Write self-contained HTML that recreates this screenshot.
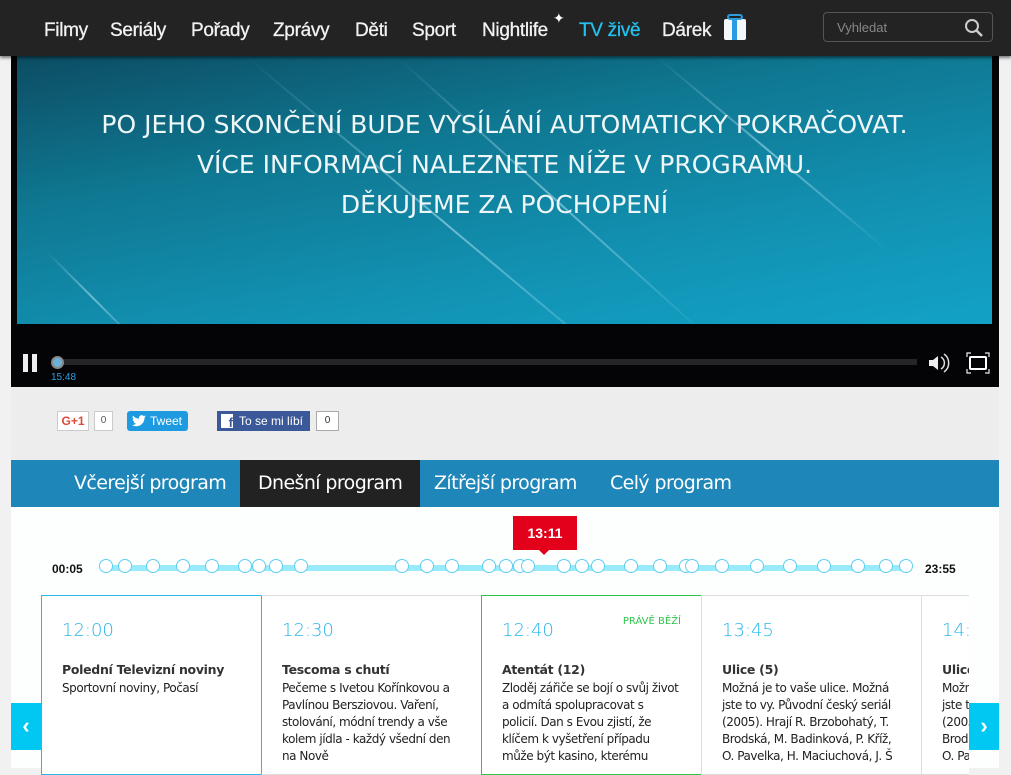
<!DOCTYPE html>
<html><head><meta charset="utf-8"><style>
*{margin:0;padding:0;box-sizing:border-box}
body{width:1011px;height:768px;overflow:hidden;background:#f1f1f1;font-family:"Liberation Sans",sans-serif;position:relative}
.abs{position:absolute}
#hdr{left:0;top:0;width:1011px;height:56px;background:#232323;box-shadow:0 2px 3px rgba(0,0,0,.5);z-index:5}
.nav{top:20px;font-size:19px;color:#f2f2f2;letter-spacing:-0.3px;-webkit-text-stroke:0.3px #f2f2f2}
#video{left:11px;top:56px;width:988px;height:331px;background:#040306}
#img{left:6px;top:0;width:975px;height:268px;background:linear-gradient(170deg,#0c4d63 0%,#0f7892 35%,#1292b3 70%,#12a2c6 100%);overflow:hidden}
.vt{width:100%;text-align:center;color:#eef6f8;font-size:25px;letter-spacing:0;font-family:"DejaVu Sans",sans-serif;font-weight:normal}
.streak{position:absolute;height:2px;background:linear-gradient(90deg,rgba(255,255,255,0),rgba(200,240,255,.5),rgba(255,255,255,0));transform-origin:left}
#main{left:11px;top:387px;width:988px;height:381px;background:#ededed}
#tabs{left:11px;top:460px;width:988px;height:47px;background:#1e86b8}
.tab{top:0;height:47px;line-height:47px;color:#fff;font-size:19px;font-family:"DejaVu Sans",sans-serif;letter-spacing:-0.6px;padding:0 18px}
#white{left:11px;top:507px;width:988px;height:261px;background:#fdfefe}
.dot{position:absolute;top:-6px;width:14px;height:14px;border-radius:50%;background:#fff;border:1.5px solid #5cd0f0}
.card{top:595px;width:221px;height:180px;border:1px solid #ddd;background:#fff;padding:24px 20px;font-family:"DejaVu Sans",sans-serif;overflow:hidden}
.tm{font-size:18px;color:#2ab6ea;font-weight:300;height:42px}
.ti{font-size:12.5px;font-weight:bold;color:#333;margin-bottom:3px;letter-spacing:-0.3px}
.ds{font-size:12px;color:#222;line-height:17px;letter-spacing:-0.45px}
.arr{top:703px;width:30px;height:47px;background:#00c8f2;color:#fff;font-size:22px;text-align:center;line-height:45px;font-weight:bold}
</style></head><body>
<div id="hdr" class="abs">
<div class="abs nav" style="left:44px">Filmy</div>
<div class="abs nav" style="left:110px">Seriály</div>
<div class="abs nav" style="left:191px">Pořady</div>
<div class="abs nav" style="left:273px">Zprávy</div>
<div class="abs nav" style="left:355px">Děti</div>
<div class="abs nav" style="left:412px">Sport</div>
<div class="abs nav" style="left:482px">Nightlife</div>
<div class="abs" style="left:553px;top:10px;color:#fff;font-size:14px">✦</div>
<div class="abs nav" style="left:579px;color:#22c2ee;-webkit-text-stroke:0.3px #22c2ee">TV živě</div>
<div class="abs nav" style="left:662px">Dárek</div>
<div class="abs" style="left:724px;top:19px;width:22px;height:21px;background:#f4f8fb;border-radius:2px"><div class="abs" style="left:8px;top:0;width:5px;height:21px;background:#2a9be0"></div><div class="abs" style="left:3px;top:-5px;width:16px;height:6px;border:2px solid #2a9be0;border-radius:4px"></div></div>
<div class="abs" style="left:823px;top:12px;width:170px;height:30px;border:1px solid #555;border-radius:4px"><span class="abs" style="left:13px;top:7px;color:#888;font-size:13px">Vyhledat</span>
<svg class="abs" style="left:140px;top:5px" width="20" height="20" viewBox="0 0 20 20"><circle cx="8" cy="8" r="6" stroke="#ccc" stroke-width="2" fill="none"/><path d="M12.5 12.5 L18 18" stroke="#ccc" stroke-width="2.5"/></svg></div>
</div>

<div id="video" class="abs">
<div id="img" class="abs">
<div class="streak" style="left:230px;top:0;width:520px;transform:rotate(40deg)"></div>
<div class="streak" style="left:380px;top:0;width:420px;transform:rotate(42deg)"></div>
<div class="streak" style="left:640px;top:0;width:300px;transform:rotate(40deg)"></div>
<div class="streak" style="left:30px;top:195px;width:130px;transform:rotate(45deg)"></div>
<div class="abs vt" style="top:54px">PO JEHO SKONČENÍ BUDE VYSÍLÁNÍ AUTOMATICKY POKRAČOVAT.</div>
<div class="abs vt" style="top:94px">VÍCE INFORMACÍ NALEZNETE NÍŽE V PROGRAMU.</div>
<div class="abs vt" style="top:134px">DĚKUJEME ZA POCHOPENÍ</div>
</div>
<div class="abs" style="left:12px;top:298px;width:5px;height:18px;background:#eee"></div>
<div class="abs" style="left:21px;top:298px;width:5px;height:18px;background:#eee"></div>
<div class="abs" style="left:44px;top:303px;width:862px;height:6px;background:#252528"></div>
<div class="abs" style="left:40px;top:300px;width:13px;height:13px;border-radius:50%;background:#6ab0d8;border:2px solid #888"></div>
<div class="abs" style="left:40px;top:316px;color:#2aa0e0;font-size:10px">15:48</div>
<svg class="abs" style="left:916px;top:296px" width="26" height="22" viewBox="0 0 26 22"><path d="M2 8h4l5-4v14l-5-4H2z" fill="#eee"/><path d="M14 5a7 7 0 0 1 0 12M17 2a11 11 0 0 1 0 18" stroke="#ddd" stroke-width="1.5" fill="none"/></svg>
<svg class="abs" style="left:955px;top:296px" width="24" height="22" viewBox="0 0 24 22"><path d="M1 5V1h4M19 1h4v4M23 17v4h-4M5 21H1v-4" stroke="#eee" stroke-width="1.2" fill="none"/><rect x="4" y="5" width="16" height="12" stroke="#fff" stroke-width="2" fill="none" rx="1"/></svg>
</div>

<div id="main" class="abs"></div>
<div class="abs" style="left:57px;top:411px;width:32px;height:20px;background:#fff;border:1px solid #ccc;color:#dd4b39;font-weight:bold;font-size:12px;text-align:center;line-height:18px">G+1</div>
<div class="abs" style="left:94px;top:411px;width:19px;height:20px;background:#fff;border:1px solid #ccc;font-size:10px;color:#555;text-align:center;line-height:18px">0</div>
<div class="abs" style="left:127px;top:411px;width:61px;height:20px;background:#1d9ae0;border-radius:3px;color:#fff;font-size:12px;line-height:20px;padding-left:23px">Tweet</div>
<svg class="abs" style="left:132px;top:415px" width="14" height="12" viewBox="0 0 14 12"><path d="M14 1.5c-.5.2-1 .4-1.6.5.6-.4 1-.9 1.2-1.6-.6.3-1.2.6-1.8.7A2.8 2.8 0 0 0 7 3.6 8 8 0 0 1 1 .6a2.8 2.8 0 0 0 .9 3.8c-.5 0-.9-.2-1.3-.4 0 1.4 1 2.5 2.3 2.8-.4.1-.9.1-1.3 0 .4 1.1 1.4 1.9 2.6 2A5.7 5.7 0 0 1 0 10c1.2.8 2.7 1.2 4.3 1.2 5.3 0 8.2-4.4 8.2-8.2v-.4c.6-.4 1.1-.9 1.5-1.1z" fill="#fff"/></svg>
<div class="abs" style="left:217px;top:411px;width:93px;height:20px;background:#3b5998;color:#fff;font-size:12px;line-height:20px;padding-left:22px">To se mi líbí</div>
<div class="abs" style="left:221px;top:414px;width:12px;height:14px;background:#fff;color:#3b5998;font-weight:bold;font-size:13px;line-height:17px;text-align:right">f</div>
<div class="abs" style="left:316px;top:411px;width:23px;height:20px;background:#fff;border:1px solid #aaa;font-size:10px;color:#333;text-align:center;line-height:18px">0</div>

<div id="tabs" class="abs">
<div class="abs tab" style="left:45px">Včerejší program</div>
<div class="abs tab" style="left:229px;background:#222">Dnešní program</div>
<div class="abs tab" style="left:405px">Zítřejší program</div>
<div class="abs tab" style="left:581px">Celý program</div>
</div>
<div id="white" class="abs"></div>
<div class="abs" style="left:513px;top:516px;width:64px;height:34px;background:#e2001a;color:#fff;font-weight:bold;font-size:14px;text-align:center;line-height:34px">13:11</div>
<div class="abs" style="left:538px;top:549px;border-left:6px solid transparent;border-right:6px solid transparent;border-top:6px solid #e2001a"></div>
<div class="abs" style="left:52px;top:562px;font-size:12px;font-weight:bold;color:#111">00:05</div>
<div class="abs" style="left:925px;top:562px;font-size:12px;font-weight:bold;color:#111">23:55</div>
<div class="abs" id="bar" style="left:104px;top:565px;width:806px;height:6px;background:#99eafa"></div>

<div class="abs card" style="left:41px;border-color:#2ab6ea"><div class="tm">12:00</div><div class="ti">Polední Televizní noviny</div><div class="ds">Sportovní noviny, Počasí</div></div>
<div class="abs card" style="left:261px;border-left-color:#2ab6ea"><div class="tm">12:30</div><div class="ti">Tescoma s chutí</div><div class="ds">Pečeme s Ivetou Kořínkovou a Pavlínou Bersziovou. Vaření, stolování, módní trendy a vše kolem jídla - každý všední den na Nově</div></div>
<div class="abs card" style="left:481px;border-color:#2ec44a"><div class="tm">12:40<span style="float:right;font-size:10px;color:#2ec44a;font-weight:normal;margin-top:-4px">PRÁVĚ BĚŽÍ</span></div><div class="ti">Atentát (12)</div><div class="ds">Zloděj zářiče se bojí o svůj život a odmítá spolupracovat s policií. Dan s Evou zjistí, že klíčem k vyšetření případu může být kasino, kterému</div></div>
<div class="abs card" style="left:701px"><div class="tm">13:45</div><div class="ti">Ulice (5)</div><div class="ds">Možná je to vaše ulice. Možná jste to vy. Původní český seriál (2005). Hrají R. Brzobohatý, T. Brodská, M. Badinková, P. Kříž, O. Pavelka, H. Maciuchová, J. Š</div></div>
<div class="abs card" style="left:921px;width:48px;padding-right:0;border-right:none"><div class="tm" style="width:200px">14:</div><div class="ti" style="width:200px">Ulice</div><div class="ds" style="width:200px">Možná<br>jste t<br>(2005<br>Brod<br>O. Pa</div></div>
<div class="abs arr" style="left:11px">‹</div>
<div class="abs arr" style="left:969px">›</div>
<script>
var xs=[106,125,153,183,212,245,259,276,301,402,427,452,489,506,520,528,564,582,598,631,660,686,692,722,757,790,824,858,886,906];
var b=document.getElementById('bar');
xs.forEach(function(x){var d=document.createElement('div');d.className='dot';d.style.left=(x-104-7)+'px';b.appendChild(d);});
</script>
</body></html>
